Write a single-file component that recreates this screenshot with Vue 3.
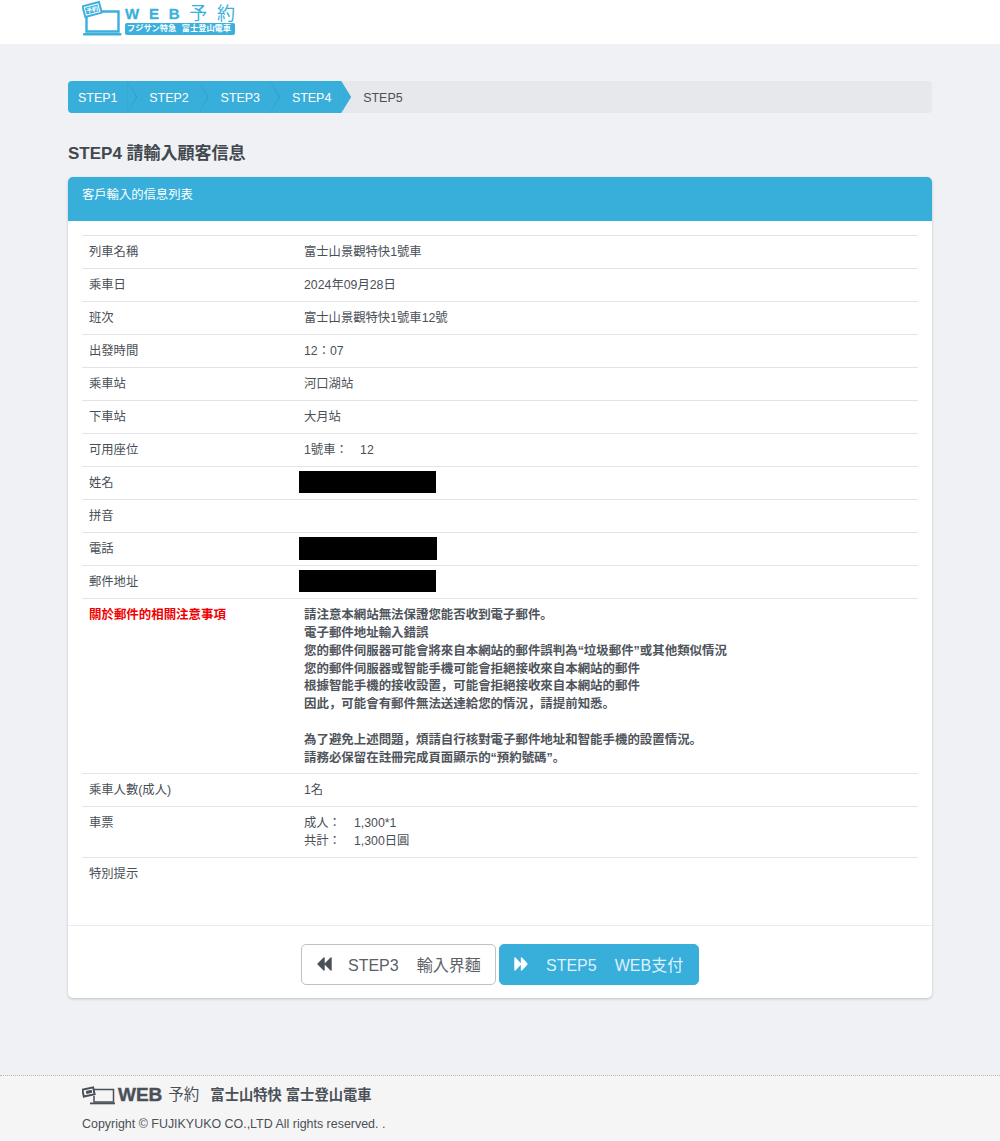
<template>
  <div class="page">
    <header class="top">
      <div class="logo">
        <svg class="logo-pc" width="41" height="37" viewBox="0 0 41 37">
          <path d="M4.5 13V31.5H36.500V11.500H19" fill="none" stroke="#3cb0dc" stroke-width="2.400" />
          <rect x="1" y="33" width="38.500" height="2.600" rx="1.200" fill="#3cb0dc" />
          <g transform="rotate(-15 10 9)">
            <rect x="1.500" y="4" width="17" height="11" fill="#fff" stroke="#3cb0dc" stroke-width="2" />
            <rect x="3.500" y="6" width="13" height="7" fill="#3cb0dc" />
            <text x="10" y="11.800" text-anchor="middle" font-size="6" font-weight="bold" fill="#fff">予約</text>
          </g>
        </svg>
        <div class="logo-words">
          <div class="logo-web"><span>W</span><span>E</span><span>B</span><span class="kana">予</span><span class="kana">約</span></div>
          <div class="logo-sub"><span>フジサン特急</span><span>富士登山電車</span></div>
        </div>
      </div>
    </header>

    <main class="main">
      <ol class="steps">
        <li v-for="s in doneSteps" :key="s" class="step done">{{ s }}</li>
        <li class="step">STEP5</li>
      </ol>

      <h2 class="title">STEP4 請輸入顧客信息</h2>

      <section class="card">
        <div class="card-head">客戶輸入的信息列表</div>
        <div class="card-body">
          <table class="info">
            <tbody>
              <tr v-for="r in rowsTop" :key="r.label">
                <th>{{ r.label }}</th>
                <td>
                  <span v-if="r.hidden" class="redact" :class="r.hidden"></span>
                  <template v-else>{{ r.value }}</template>
                </td>
              </tr>
              <tr class="notes">
                <th class="red">關於郵件的相關注意事項</th>
                <td>
                  <div v-for="(line, i) in notes" :key="i" class="note-line">{{ line }}</div>
                </td>
              </tr>
              <tr>
                <th>乘車人數(成人)</th>
                <td>1名</td>
              </tr>
              <tr>
                <th>車票</th>
                <td>
                  <div><span class="ticket-label">成人：</span>1,300*1</div>
                  <div><span class="ticket-label">共計：</span>1,300日圓</div>
                </td>
              </tr>
              <tr class="last">
                <th>特別提示</th>
                <td></td>
              </tr>
            </tbody>
          </table>
        </div>
        <div class="card-foot">
          <button class="btn prev">
            <svg width="15" height="14" viewBox="0 0 15 14"><path d="M7 1V13L1 7ZM14 1V13L8 7Z" fill="#4a5058" stroke="#4a5058" stroke-width="1.400" stroke-linejoin="round" /></svg>
            <span>STEP3<span class="btn-text">輸入界麵</span></span>
          </button>
          <button class="btn next">
            <svg width="14" height="14" viewBox="0 0 14 14"><path d="M1 1V13L6.500 7ZM7.500 1V13L13 7Z" fill="#fff" stroke="#fff" stroke-width="1.400" stroke-linejoin="round" /></svg>
            <span class="next-label">STEP5<span class="btn-text">WEB支付</span></span>
          </button>
        </div>
      </section>
    </main>

    <footer class="bottom">
      <div class="foot-brand">
        <svg width="33" height="19" viewBox="0 0 33 19">
          <path d="M12 3.500H31.500V16H12V10" fill="none" stroke="#4a5058" stroke-width="1.500" />
          <rect x="8" y="16.500" width="25" height="1.800" fill="#4a5058" />
          <g transform="rotate(-12 6 6)">
            <rect x="1" y="2.500" width="11" height="7" fill="#fff" stroke="#4a5058" stroke-width="2" />
            <rect x="4" y="4.500" width="6" height="3" fill="#4a5058" />
          </g>
        </svg>
        <span class="foot-web">WEB</span>
        <span class="foot-kana">予約</span>
        <span class="foot-name">富士山特快 富士登山電車</span>
      </div>
      <div class="copy">Copyright © FUJIKYUKO CO.,LTD All rights reserved. .</div>
    </footer>
  </div>
</template>

<script setup>
const doneSteps = ["STEP1", "STEP2", "STEP3", "STEP4"]

const rowsTop = [
  { label: "列車名稱", value: "富士山景觀特快1號車" },
  { label: "乘車日", value: "2024年09月28日" },
  { label: "班次", value: "富士山景觀特快1號車12號" },
  { label: "出發時間", value: "12：07" },
  { label: "乘車站", value: "河口湖站" },
  { label: "下車站", value: "大月站" },
  { label: "可用座位", value: "1號車：　12" },
  { label: "姓名", hidden: "short" },
  { label: "拼音", value: "" },
  { label: "電話", hidden: "tall" },
  { label: "郵件地址", hidden: "short" },
]

const notes = [
  "請注意本網站無法保證您能否收到電子郵件。",
  "電子郵件地址輸入錯誤",
  "您的郵件伺服器可能會將來自本網站的郵件誤判為“垃圾郵件”或其他類似情況",
  "您的郵件伺服器或智能手機可能會拒絕接收來自本網站的郵件",
  "根據智能手機的接收設置，可能會拒絕接收來自本網站的郵件",
  "因此，可能會有郵件無法送達給您的情況，請提前知悉。",
  "\u00a0",
  "為了避免上述問題，煩請自行核對電子郵件地址和智能手機的設置情況。",
  "請務必保留在註冊完成頁面顯示的“預約號碼”。",
]
</script>

<style>
html, body {
  margin: 0;
  background: #eff1f5;
}
</style>

<style scoped>
.page {
  font-family: "Liberation Sans", "Noto Sans CJK JP", sans-serif;
  font-size: 12.32px;
  line-height: 18px;
  color: #4a5058;
  height: 1141px;
  display: flex;
  flex-direction: column;
  overflow: hidden;
}

/* header */
.top {
  height: 44px;
  background: #fff;
  padding-left: 82px;
  flex: none;
}
.logo {
  display: flex;
  gap: 2px;
  height: 37px;
}
.logo-pc {
  flex: none;
}
.logo-words {
  width: 110px;
  padding-top: 5px;
}
.logo-web {
  display: flex;
  justify-content: space-between;
  align-items: center;
  height: 18px;
  font-size: 15px;
  font-weight: bold;
  line-height: 18px;
  color: #3cb0dc;
  -webkit-text-stroke: 0.3px #3cb0dc;
}
.kana {
  font-weight: normal;
  font-size: 18px;
  -webkit-text-stroke: 0;
}
.logo-sub {
  height: 12px;
  background: #3cb0dc;
  border-radius: 2px;
  color: #fff;
  font-size: 8.200px;
  font-weight: bold;
  line-height: 12px;
  display: flex;
  justify-content: space-between;
  padding: 0 4px 0 2px;
  white-space: nowrap;
}

/* steps */
.main {
  flex: 1;
  padding: 37px 68px 0;
}
.steps {
  list-style: none;
  margin: 0;
  padding: 0;
  height: 32px;
  display: flex;
  background: #e6e8ec;
  border-radius: 4px;
  overflow: hidden;
  font-size: 12.450px;
}
.step {
  position: relative;
  padding: 0 9.900px 0 22px;
  line-height: 34px;
  color: #4a5058;
}
.step.done {
  background: #38aedb;
  color: #fff;
}
.step.done:first-child {
  padding-left: 10px;
}
.step.done::before,
.step.done::after {
  content: "";
  position: absolute;
  top: 0;
  bottom: 0;
  clip-path: polygon(0 0, 100% 50%, 0 100%);
  z-index: 1;
}
.step.done::before {
  right: -10px;
  width: 10px;
  background: #2f9bc6;
}
.step.done::after {
  right: -9px;
  width: 9px;
  background: #38aedb;
}
.step.done:nth-child(4)::before {
  background: #38aedb;
}

.title {
  margin: 32px 0 14px;
  font-size: 17px;
  line-height: 18px;
  font-weight: bold;
  color: #43484f;
}

/* card */
.card {
  background: #fff;
  border-radius: 5px;
  box-shadow: 0 1px 3px rgba(0, 0, 0, 0.2);
  overflow: hidden;
}
.card-head {
  height: 44px;
  box-sizing: border-box;
  padding: 9px 14px;
  background: #38aedb;
  color: #fff;
}
.card-body {
  padding: 14px 14px 0;
}
.info {
  width: 100%;
  border-collapse: collapse;
  table-layout: fixed;
}
.info th,
.info td {
  padding: 7px;
  border-top: 1px solid #e3e4e8;
  text-align: left;
  vertical-align: top;
  font-weight: normal;
}
.info th {
  width: 201px;
}
.info .red {
  color: #f00000;
  font-size: 12.450px;
  font-weight: bold;
}
.notes td {
  padding: 8px 7px 5px;
  font-size: 12.450px;
  font-weight: bold;
  color: #50555c;
}
.note-line {
  line-height: 17.850px;
}
.redact {
  display: block;
  width: 137px;
  margin: -3px 0 -1px -5px;
  background: #000;
}
.redact.short {
  height: 22px;
}
.redact.tall {
  width: 138px;
  height: 23px;
  margin-bottom: -2px;
}
.ticket-label {
  display: inline-block;
  width: 50px;
}
.last th,
.last td {
  height: 53px;
}

.card-foot {
  height: 73px;
  box-sizing: border-box;
  border-top: 1px solid #e9eaee;
  display: flex;
  justify-content: center;
  gap: 3px;
  padding-top: 18px;
}
.btn {
  height: 41px;
  box-sizing: border-box;
  border-radius: 5px;
  font-family: inherit;
  font-size: 16px;
  display: flex;
  align-items: center;
  gap: 16px;
  cursor: pointer;
}
.btn-text {
  margin-left: 18px;
}
.next-label {
  margin-left: 2px;
}
.prev {
  width: 195px;
  padding: 0 14px 0 15px;
  background: #fff;
  border: 1px solid #bfc0c8;
  color: #5c6168;
}
.next {
  width: 200px;
  padding: 0 14px;
  background: #38aedb;
  border: 1px solid #38aedb;
  color: #dff2fa;
}

/* footer */
.bottom {
  flex: none;
  height: 66px;
  box-sizing: border-box;
  border-top: 1px dotted #b9b9b9;
  background: #f5f5f5;
  padding: 7px 82px 0;
}
.foot-brand {
  display: flex;
  align-items: center;
  height: 24px;
  color: #4a5058;
}
.foot-web {
  margin-left: 3px;
  font-size: 19px;
  font-weight: bold;
  -webkit-text-stroke: 0.4px #4a5058;
}
.foot-kana {
  margin-left: 6px;
  font-size: 15.500px;
}
.foot-name {
  margin-left: 11px;
  font-size: 14.300px;
  font-weight: bold;
}
.copy {
  margin-top: 8px;
  line-height: 18px;
  font-size: 12.450px;
}
</style>
